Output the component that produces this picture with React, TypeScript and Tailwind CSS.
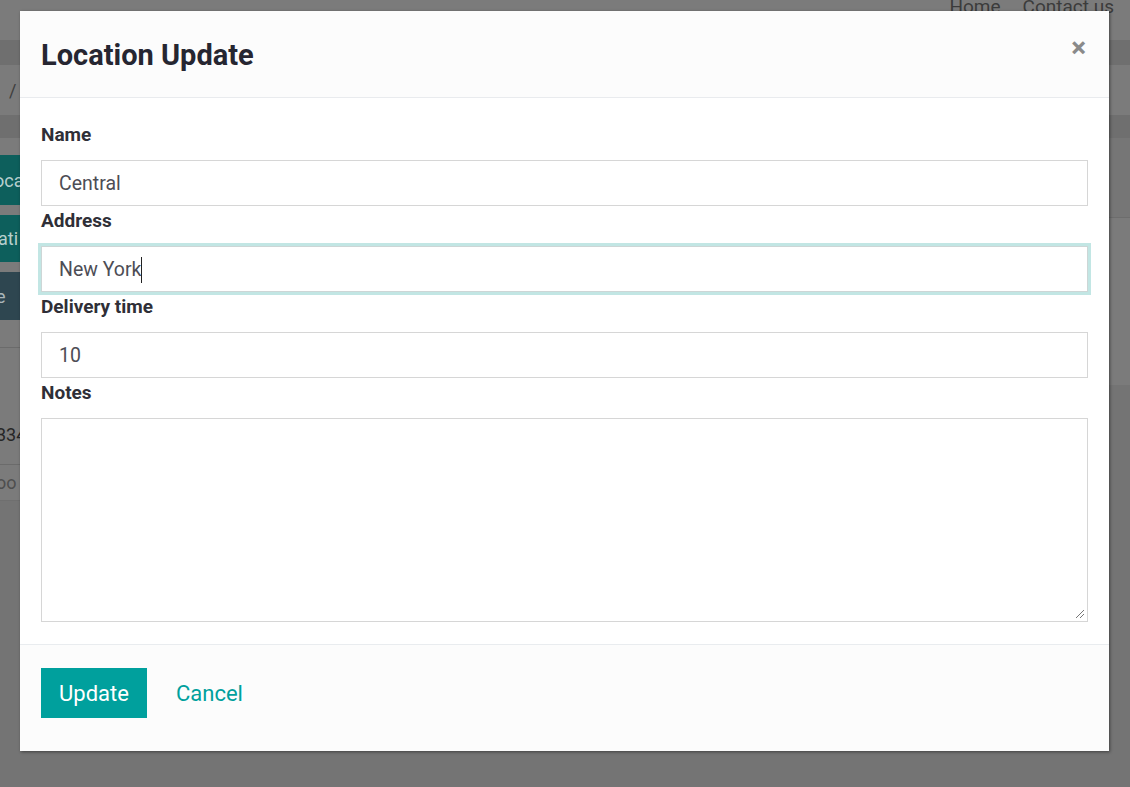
import React from "react";

function Field({ label, value, focused = false }: { label: string; value: string; focused?: boolean }) {
  return (
    <div className="flex flex-col">
      <div className="mt-[3px] mb-[13px] text-[19px] font-bold leading-[24px] text-[#2f2f37]">{label}</div>
      <div
        className={
          focused
            ? "flex h-[46px] items-center border border-[#cdd6d6] bg-white px-[17px] pt-[2px] text-[19.5px] text-[#4d4d55] shadow-[0_0_0_3px_#c2e6e4]"
            : "flex h-[46px] items-center border border-[#d6d6d6] bg-white px-[17px] pt-[2px] text-[19.5px] text-[#4d4d55]"
        }
      >
        <span>{value}</span>
        {focused && <span className="inline-block h-[26px] w-[1px] bg-[#222]" />}
      </div>
    </div>
  );
}

export default function App() {
  return (
    <div className="relative h-[787px] w-[1130px] overflow-hidden bg-[#747474] font-['Roboto',sans-serif]">
      {/* background page (dimmed) */}
      <div className="flex flex-col">
        <div className="flex h-[40px] items-start justify-end gap-[22px] bg-[#7b7b7b] pr-[16px] text-[19px] leading-[20px] text-[#3b3b3b]">
          <span className="-mt-[3px]">Home</span>
          <span className="-mt-[3px]">Contact us</span>
        </div>
        <div className="h-[25px] bg-[#6f6f6f]" />
        <div className="flex h-[50px] items-center bg-[#7b7b7b] pl-[9px] text-[18px] text-[#3e3e3e]">/</div>
        <div className="h-[23px] bg-[#6f6f6f]" />
        <div className="flex">
          <div className="flex w-[60px] flex-col self-start bg-[#7b7b7b]">
            <div className="h-[17px]" />
            <div className="flex h-[50px] items-center bg-[#0d5f5c] text-[18px] text-[#b7cfce]">
              <span className="-ml-[6px]">oca</span>
            </div>
            <div className="h-[10px]" />
            <div className="flex h-[47px] items-center bg-[#0d5f5c] text-[18px] text-[#b7cfce]">
              <span className="-ml-[2px]">ati</span>
            </div>
            <div className="h-[10px]" />
            <div className="flex h-[48px] items-center bg-[#2e4650] text-[18px] text-[#aab6ba]">
              <span className="-ml-[4px]">e</span>
            </div>
            <div className="h-[28px] border-b border-[#6b6b6b]" />
            <div className="flex h-[117px] items-end border-b border-[#6b6b6b] pb-[16px] text-[18px] text-[#262626]">
              <span className="-ml-[4px]">334</span>
            </div>
            <div className="flex h-[36px] items-center border-b border-[#6f6f6f] text-[18px] text-[#4e4e4e]">
              <span className="-ml-[4px]">oo</span>
            </div>
          </div>
          <div className="flex-1" />
          <div className="flex w-[40px] flex-col">
            <div className="h-[80px] border-b border-[#6d6d6d] bg-[#767676]" />
            <div className="h-[167px] bg-[#7b7b7b]" />
            <div className="h-[400px] bg-[#747474]" />
          </div>
        </div>
      </div>

      {/* modal */}
      <div className="absolute left-[20px] top-[11px] flex h-[740px] w-[1089px] flex-col bg-white shadow-[1px_1px_3px_rgba(0,0,0,0.45)]">
        <div className="flex h-[87px] items-center justify-between border-b border-[#e9ebee] bg-[#fcfcfc] pl-[21px] pr-[23px]">
          <div className="pt-[2px] text-[29px] font-bold leading-none text-[#262631]">Location Update</div>
          <div className="-mt-[13px] text-[28px] font-bold leading-none text-[#8a8a8a]">×</div>
        </div>
        <div className="flex flex-col px-[21px] pb-[22px] pt-[22px]">
          <Field label="Name" value="Central" />
          <Field label="Address" value="New York" focused />
          <Field label="Delivery time" value="10" />
          <div className="flex flex-col">
            <div className="mt-[3px] mb-[13px] text-[19px] font-bold leading-[24px] text-[#2f2f37]">Notes</div>
            <div className="relative h-[204px] border border-[#d6d6d6] bg-white">
              <svg className="absolute bottom-[2px] right-[2px]" width="10" height="10" viewBox="0 0 10 10">
                <line x1="1" y1="9" x2="9" y2="1" stroke="#777" strokeWidth="1" />
                <line x1="5" y1="9" x2="9" y2="5" stroke="#777" strokeWidth="1" />
              </svg>
            </div>
          </div>
        </div>
        <div className="flex flex-1 items-start border-t border-[#e9ecef] bg-[#fcfcfc] px-[21px] pt-[23px]">
          <div className="flex h-[50px] w-[106px] items-center justify-center bg-[#00a09d] text-[22px] text-white">Update</div>
          <div className="ml-[29px] flex h-[50px] items-center text-[22px] text-[#00a09d]">Cancel</div>
        </div>
      </div>
    </div>
  );
}
